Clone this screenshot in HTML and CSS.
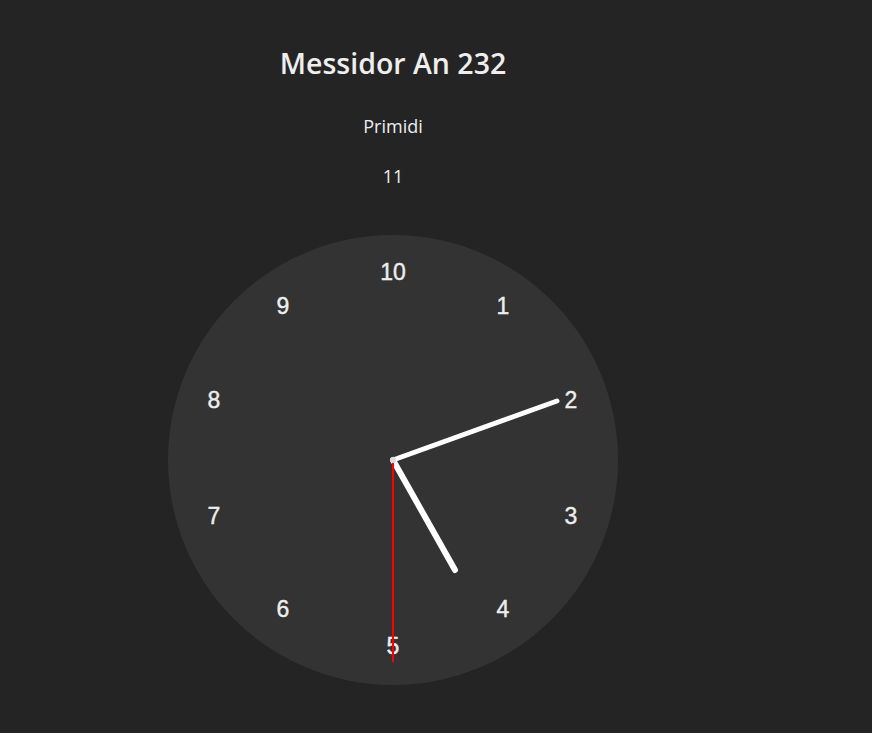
FILE: index.html
```html
<!DOCTYPE html>
<html lang="fr">
<head>
<meta charset="utf-8">
<title>Horloge républicaine</title>
<link rel="stylesheet" href="styles.css">
</head>
<body>
<main class="wrap">
  <h1 class="title">Messidor An 232</h1>
  <p class="dayname">Primidi</p>
  <p class="daynum">11</p>
  <svg class="clock" width="450" height="450" viewBox="0 0 450 450">
    <circle cx="225" cy="225" r="225" fill="#333333"/>
    <g class="nums" fill="#eeeeee" stroke="#eeeeee" stroke-width="0.4" font-family="Liberation Sans, Arial, sans-serif" font-size="23" text-anchor="middle" dominant-baseline="central">
      <text x="225" y="37">10</text>
      <text x="335" y="71">1</text>
      <text x="403" y="165">2</text>
      <text x="403" y="281">3</text>
      <text x="335" y="374">4</text>
      <text x="225" y="411">5</text>
      <text x="115" y="374">6</text>
      <text x="46" y="281">7</text>
      <text x="46" y="165">8</text>
      <text x="115" y="71">9</text>
    </g>
    <line x1="225" y1="225" x2="287" y2="335" stroke="#ffffff" stroke-width="6" stroke-linecap="round"/>
    <line x1="225" y1="225" x2="389" y2="166" stroke="#ffffff" stroke-width="5" stroke-linecap="round"/>
    <line x1="225" y1="225" x2="225" y2="427" stroke="#ff0000" stroke-width="2"/>
    <circle cx="225" cy="225" r="3" fill="#dddddd"/>
  </svg>
</main>
</body>
</html>
```
FILE: styles.css
```css
html, body {
  background: #242424;
}
body {
  margin: 0;
  color: #eeeeee;
  font-family: "Open Sans", "Noto Sans", sans-serif;
}
.wrap {
  width: 450px;
  margin-left: 168px;
  padding-top: 44px;
  display: flex;
  flex-direction: column;
  align-items: center;
}
.title {
  margin: 0;
  font-size: 28.5px;
  font-weight: 600;
  line-height: 38px;
}
.dayname {
  margin: 31px 0 0;
  font-size: 18px;
  line-height: 26px;
}
.daynum {
  margin: 24px 0 0;
  font-size: 18px;
  line-height: 26px;
}
.clock {
  display: block;
  margin-top: 46px;
}
```
